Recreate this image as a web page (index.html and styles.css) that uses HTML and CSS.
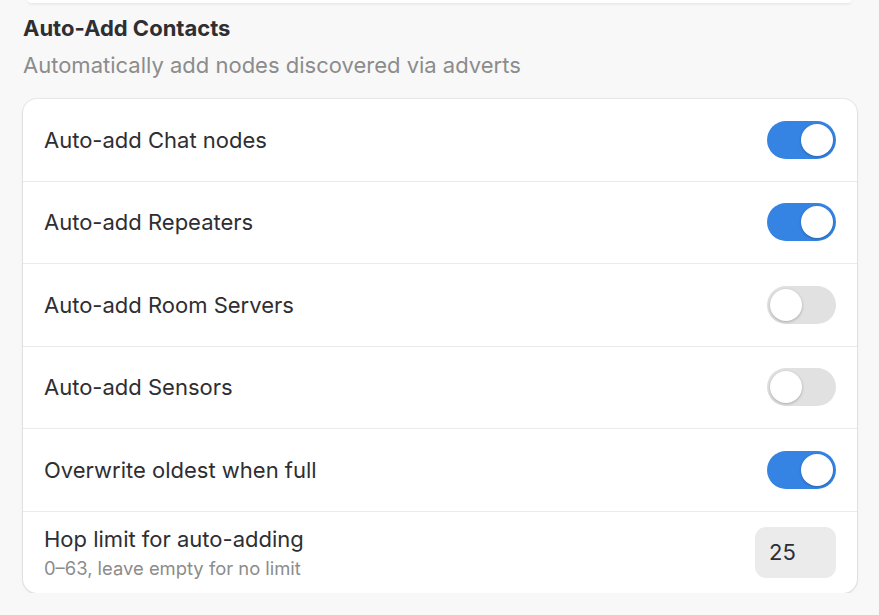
FILE: index.html
```html
<!DOCTYPE html>
<html>
<head>
<meta charset="utf-8">
<link rel="stylesheet" href="styles.css">
</head>
<body>
<div class="prev-card"></div>
<section class="group">
  <h2 class="group-title">Auto-Add Contacts</h2>
  <p class="group-desc">Automatically add nodes discovered via adverts</p>
  <div class="card">
    <div class="row">
      <span class="label">Auto-add Chat nodes</span>
      <span class="switch on"><span class="knob"></span></span>
    </div>
    <div class="row">
      <span class="label">Auto-add Repeaters</span>
      <span class="switch on"><span class="knob"></span></span>
    </div>
    <div class="row">
      <span class="label">Auto-add Room Servers</span>
      <span class="switch"><span class="knob"></span></span>
    </div>
    <div class="row">
      <span class="label">Auto-add Sensors</span>
      <span class="switch"><span class="knob"></span></span>
    </div>
    <div class="row">
      <span class="label">Overwrite oldest when full</span>
      <span class="switch on"><span class="knob"></span></span>
    </div>
    <div class="row row-tall">
      <div class="label-stack">
        <span class="label">Hop limit for auto-adding</span>
        <span class="sublabel">0–63, leave empty for no limit</span>
      </div>
      <div class="num-input">25</div>
    </div>
  </div>
</section>
</body>
</html>
```
FILE: styles.css
```css
html, body {
  margin: 0;
  padding: 0;
  background: #f8f8f8;
  font-family: "Inter", "Noto Sans", sans-serif;
  color: #2e2e33;
}
.prev-card {
  height: 3px;
  margin: 0 28px 0 28px;
  background: #ffffff;
  border-radius: 0 0 14px 14px;
  box-shadow: 0 1px 3px rgba(0,0,0,0.10);
}
.group {
  padding: 0 22px 0 23px;
}
.group-title {
  margin: 11px 0 0 0;
  font-size: 22px;
  font-weight: 700;
  line-height: 28px;
  color: #2e2e33;
}
.group-desc {
  margin: 9px 0 0 0;
  font-size: 22px;
  line-height: 28px;
  color: #8c8c8c;
}
.card {
  margin-top: 20px;
  background: #ffffff;
  border-radius: 14px;
  box-shadow: 0 0 0 1px rgba(0,0,0,0.06), 0 1px 3px rgba(0,0,0,0.10);
}
.row {
  display: flex;
  align-items: center;
  justify-content: space-between;
  padding: 0 21px 0 21px;
  border-bottom: 1px solid #ebebeb;
  box-sizing: border-box;
  height: 82.5px;
}
.row:last-child {
  border-bottom: none;
}
.row-tall {
  height: 81px;
}
.label {
  font-size: 22px;
  line-height: 26px;
  color: #2e2e33;
}
.label-stack {
  display: flex;
  flex-direction: column;
  gap: 5px;
}
.sublabel {
  font-size: 18.4px;
  line-height: 22px;
  color: #8c8c8c;
}
.switch {
  position: relative;
  width: 69px;
  height: 38px;
  border-radius: 19px;
  background: #e1e1e1;
  box-sizing: border-box;
}
.switch.on {
  background: #3584e4;
}
.knob {
  position: absolute;
  top: 3px;
  left: 3px;
  width: 32px;
  height: 32px;
  border-radius: 50%;
  background: #ffffff;
  box-shadow: 0 1px 3px rgba(0,0,0,0.25);
}
.switch.on .knob {
  left: 34px;
}
.num-input {
  width: 81px;
  height: 51px;
  box-sizing: border-box;
  padding-left: 14px;
  display: flex;
  align-items: center;
  background: #ebebeb;
  border-radius: 11px;
  font-size: 22px;
  color: #2e2e33;
}
```
